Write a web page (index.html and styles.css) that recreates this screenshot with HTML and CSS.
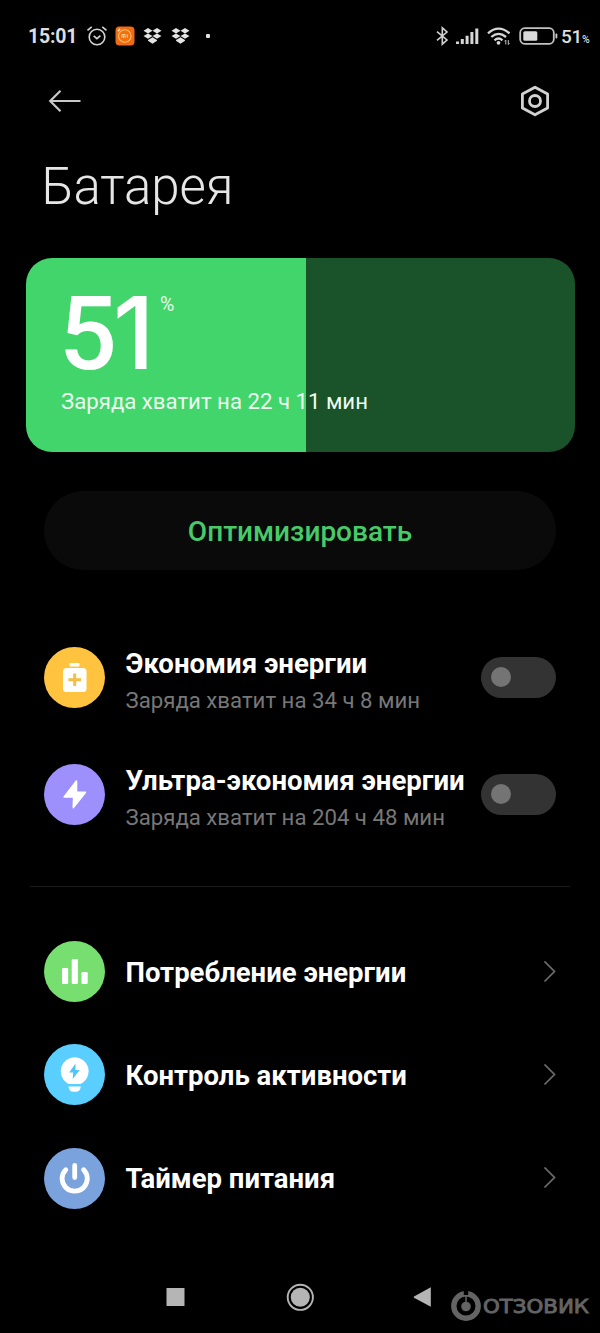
FILE: index.html
```html
<!DOCTYPE html>
<html lang="ru">
<head>
<meta charset="utf-8">
<title>Батарея</title>
<link rel="stylesheet" href="styles.css">
</head>
<body>
<div class="screen">
  <header class="status">
    <span class="time">15:01</span>
    <svg class="alarm" width="22" height="22" viewBox="0 0 22 22" fill="none" stroke="#d6d6d6" stroke-width="1.6"><circle cx="11" cy="12" r="7.8"/><path d="M7.7 10.8l3.2 2.8 3.5-3M1.5 5.3l4.2-3.4M20.5 5.3l-4.2-3.4"/></svg>
    <svg class="mi" width="20" height="20" viewBox="0 0 20 20"><rect x=".5" y=".5" width="19" height="19" rx="4" fill="#ef6b14"/><circle cx="9.8" cy="10" r="6.3" fill="#f4700f" stroke="#ffc06a" stroke-width="1.1"/><path d="M7 11.7V8.5h3v3.2M8.5 9.5v2.2M12.2 8.3v3.4" fill="none" stroke="#ffd29a"/><path d="M2.8 5.2l2.4-2.4" stroke="#ffe1b8" stroke-width="1.5"/></svg>
    <svg class="drop" width="19" height="18" viewBox="0 0 19 18" fill="#e4e4e4"><path d="M5 1l4.500 2.700L5 6.400.5 3.700zM14 1l4.500 2.700L14 6.400 9.500 3.700zM5 6.400l4.500 2.700L5 11.800.5 9.100zM14 6.400l4.500 2.700-4.500 2.700-4.500-2.700zM9.500 10.200l1.500 1 3 1.700v.8l-4.500 3-4.500-3v-.8l3-1.700z"/></svg>
    <svg class="drop2" width="19" height="18" viewBox="0 0 19 18" fill="#e4e4e4"><path d="M5 1l4.500 2.700L5 6.400.5 3.700zM14 1l4.500 2.700L14 6.400 9.500 3.700zM5 6.400l4.500 2.700L5 11.800.5 9.100zM14 6.400l4.500 2.700-4.500 2.700-4.500-2.700zM9.500 10.200l1.500 1 3 1.700v.8l-4.500 3-4.500-3v-.8l3-1.700z"/></svg>
    <i class="dot"></i>
    <svg class="bt" width="13" height="20" viewBox="0 0 13 20" fill="none" stroke="#d0d0d0" stroke-width="1.6"><path d="M1 5.7l10 8.3-4.7 4.2V1.8L11 6 1 14.3"/></svg>
    <svg class="signal" width="23" height="17" viewBox="0 0 23 17" fill="#d6d6d6"><path d="M0 13.500h3V16H0zM4.800 11h3v5h-3zM9.600 7.800h3V16h-3zM14.400 4h3v12h-3zM19.300.5h3V16h-3z"/></svg>
    <svg class="wifi" width="24" height="19" viewBox="0 0 24 19"><g fill="none" stroke="#d6d6d6" stroke-width="2.300"><path d="M1 6.300Q11.500-3 22.500 6.300M4.300 10Q11.500 3.700 19 10M7.500 13.300Q11.500 9.700 15.500 13.300"/></g><circle cx="11.500" cy="15.800" r="1.900" fill="#d6d6d6"/><path d="M18.800 17.500v-4.500l-1.200 1.300M21.300 13v4.500l1.200-1.300" fill="none" stroke="#c0c0c0"/></svg>
    <svg class="cell" width="40" height="18" viewBox="0 0 40 18"><rect x="1.200" y="1.200" width="33.600" height="15.600" rx="4.500" fill="none" stroke="#c2c2c2" stroke-width="1.800"/><rect x="4.300" y="4.300" width="14" height="9.400" rx="1.500" fill="#d9d9d9"/><rect x="36.500" y="6.500" width="1.800" height="5" rx=".8" fill="#ccc"/></svg>
    <span class="charge">51<small>%</small></span>
  </header>

  <nav class="topbar">
    <svg width="34" height="24" viewBox="0 0 34 24" fill="none" stroke="#c8c8c8" stroke-width="2.200"><path d="M32.500 12H2.500M12.500 1.800L2.200 12l10.300 10.200"/></svg>
    <svg width="30" height="32" viewBox="0 0 30 32" fill="none" stroke="#d2d2d2" stroke-width="2.800"><path stroke-linejoin="round" d="M15 2.200l12.600 6.900v13.800L15 29.800 2.400 22.900V9.100z"/><circle cx="15" cy="16" r="5.500"/></svg>
  </nav>

  <h1 class="title">Батарея</h1>

  <section class="battery">
    <div class="level"><b class="number">5<span class="one">1</span></b><span class="percent">%</span></div>
    <p class="left">Заряда хватит на 22 ч 11 мин</p>
  </section>

  <button class="optimize">Оптимизировать</button>

  <section class="modes">
    <div class="row">
      <svg class="badge" viewBox="0 0 61 61"><circle cx="30.500" cy="30.500" r="30.500" fill="#ffc340"/><rect x="25.500" y="16" width="10" height="3.400" rx="1" fill="#fff"/><rect x="19" y="21" width="23.500" height="24" rx="3.500" fill="#fff"/><path d="M30.700 26.500v12.600M24.400 32.800H37" stroke="#f6bd45" stroke-width="3"/></svg>
      <div class="text"><h2>Экономия энергии</h2><p>Заряда хватит на 34 ч 8 мин</p></div>
      <span class="switch"></span>
    </div>
    <div class="row">
      <svg class="badge" viewBox="0 0 61 61"><circle cx="30.500" cy="30.500" r="30.500" fill="#9d90fc"/><path d="M31.800 16.500L19.500 32.500q-.5 1 .5 1.200H28.800l-.3 10q.3 1.500 1.500.3L42 29q.7-1-.5-1.400H33.300V17q-.5-1.200-1.500-.5z" fill="#fff"/></svg>
      <div class="text"><h2>Ультра-экономия энергии</h2><p>Заряда хватит на 204 ч 48 мин</p></div>
      <span class="switch"></span>
    </div>
  </section>

  <hr class="divider">

  <section class="links">
    <div class="row">
      <svg class="badge" viewBox="0 0 61 61"><circle cx="30.500" cy="30.500" r="30.500" fill="#76df70"/><g fill="#fff"><rect x="18" y="27" width="6.200" height="16" rx="1.200"/><rect x="27.700" y="18" width="6.200" height="25" rx="1.200"/><rect x="37.500" y="31" width="6.200" height="12" rx="1.200"/></g></svg>
      <h2>Потребление энергии</h2>
      <svg class="chevron" viewBox="0 0 13 22"><path d="M1.500 .5l10 10-10 10"/></svg>
    </div>
    <div class="row">
      <svg class="badge" viewBox="0 0 61 61"><circle cx="30.500" cy="30.500" r="30.500" fill="#5acfff"/><path d="M30.700 13.300a14 14 0 0 1 8 25.500q-2 1.300-3 1.300H25.700q-1.500 0-3-1.300a14 14 0 0 1 8-25.500z" fill="#fff"/><path d="M24.500 42.500h12.300q-.6 5.300-5 5.300h-2.300q-4.400 0-5-5.300z" fill="#fff"/><path d="M31.500 19.500l-6.300 9h4l-.5 6.500 7-9h-4.200z" fill="#4fc6f5"/></svg>
      <h2>Контроль активности</h2>
      <svg class="chevron" viewBox="0 0 13 22"><path d="M1.500 .5l10 10-10 10"/></svg>
    </div>
    <div class="row">
      <svg class="badge" viewBox="0 0 61 61"><circle cx="30.500" cy="30.500" r="30.500" fill="#7aa3dd"/><path d="M21.800 21.700a12.600 12.600 0 1 0 17.800 0M30.700 17.500v12" fill="none" stroke="#fff" stroke-width="4.800" stroke-linecap="round"/></svg>
      <h2>Таймер питания</h2>
      <svg class="chevron" viewBox="0 0 13 22"><path d="M1.500 .5l10 10-10 10"/></svg>
    </div>
  </section>

  <footer class="navbar">
    <svg width="300" height="34" viewBox="0 0 300 34" fill="#b5b5b5"><rect x="16.500" y="8" width="18" height="18" rx=".6"/><circle cx="150.300" cy="17.300" r="9.500"/><circle cx="150.300" cy="17.300" r="12.600" fill="none" stroke="#b5b5b5" stroke-width="1.900"/><path d="M280.800 7.300v19.500L264 17.800q-.6-.6 0-1.200z"/></svg>
    <svg class="mark" width="144" height="34" viewBox="0 0 144 34"><circle cx="16" cy="17" r="12.200" fill="none" stroke="#646464" stroke-width="5.400"/><rect x="13.800" y="2" width="4.400" height="4" fill="#000"/><path d="M16 6v10" stroke="#646464" stroke-width="1.500"/><circle cx="16" cy="17.500" r="4.800" fill="#646464"/><text x="33" y="24" textLength="106" lengthAdjust="spacingAndGlyphs">ОТЗОВИК</text></svg>
  </footer>
</div>
</body>
</html>
```
FILE: styles.css
```css
* { box-sizing: border-box; }
body { margin: 0; background: #000; color: #fff; font-family: Roboto, "Noto Sans", sans-serif; }
h1, h2, p { margin: 0; font-weight: 400; white-space: nowrap; }
svg { display: block; flex: none; }
.screen { width: 600px; height: 1333px; overflow: hidden; display: flex; flex-direction: column; background: #000; }

.status { height: 72px; display: flex; align-items: center; padding-left: 28px; color: #dedede; }
.time { width: 57.500px; padding-top: 1px; font-size: 19.500px; font-weight: 700; letter-spacing: -.2px; white-space: nowrap; }
.mi { margin-left: 7px; }
.drop { margin-left: 8px; }
.drop2 { margin-left: 9px; }
.dot { width: 4px; height: 4px; margin-left: 16px; background: #e0e0e0; border-radius: 1px; }
.bt { margin-left: auto; }
.signal { margin-left: 7px; }
.wifi { margin-left: 8px; }
.cell { margin-left: 8px; }
.charge { width: 39px; margin-left: 2px; font-size: 19px; font-weight: 500; letter-spacing: -.3px; white-space: nowrap; }
.charge small { font-size: 10.500px; }

.topbar { height: 58px; display: flex; align-items: center; justify-content: space-between; padding: 0 50px 0 48px; }
.title { height: 128px; padding-left: 41.500px; font-size: 51px; line-height: 114px; font-weight: 300; letter-spacing: -.1px; color: #e6e6e6; }

.battery { width: 549px; height: 194px; margin-left: 25.500px; padding: 31px 0 0 35.500px; border-radius: 26px; background: linear-gradient(90deg, #41d56b 280px, #1a5329 280px); }
.level { height: 90px; display: flex; align-items: flex-start; }
.number { width: 90px; flex: none; margin-left: -2px; font-size: 102px; line-height: 90px; font-weight: 500; white-space: nowrap; }
.one { margin-left: -4px; font-family: Inter, Roboto, sans-serif; font-size: 100px; line-height: 0; }
.percent { margin-left: 11px; padding-top: 6px; font-size: 19.500px; line-height: 20px; color: #e6fbe9; }
.left { font-size: 22.200px; line-height: 44px; color: #edfbef; }

.optimize { width: 512px; height: 79px; margin: 39px 0 0 44px; padding: 2px 0 0; border: 0; border-radius: 40px; background: #0a0a0a; color: #48ca69; font: 500 28px Roboto, sans-serif; }

.modes { margin-top: 49px; }
.row { display: flex; align-items: center; padding: 0 44.500px 0 44px; }
.modes .row { height: 116.700px; }
.badge { width: 61px; height: 61px; margin-right: 20.500px; }
h2 { font-size: 27.600px; line-height: 38px; font-weight: 700; }
.text { padding-top: 9px; }
.text p { font-size: 22.200px; line-height: 35px; color: #777; }
.switch { width: 75px; height: 41px; flex: none; margin-left: auto; padding: 10.500px; border-radius: 21px; background: #333; }
.switch::before { content: ""; display: block; width: 20px; height: 20px; border-radius: 50%; background: #747474; }
.divider { width: 540px; height: 1px; margin: 33.500px 0 0 30px; border: 0; flex: none; background: #1b1b1b; }
.links { padding-top: 33px; }
.links .row { height: 103.300px; }
.links h2 { padding-top: 2px; font-size: 27.500px; }
.chevron { width: 13px; height: 22px; margin-left: auto; fill: none; stroke: #6d6d6d; stroke-width: 1.700; }

.navbar { height: 53px; margin-top: auto; display: flex; padding: 0 0 19px 150px; align-items: flex-start; }
.mark { margin-top: 9px; }
.mark text { font-family: "DejaVu Sans", sans-serif; font-size: 19px; fill: #646464; stroke: #646464; stroke-width: .9px; }
```
